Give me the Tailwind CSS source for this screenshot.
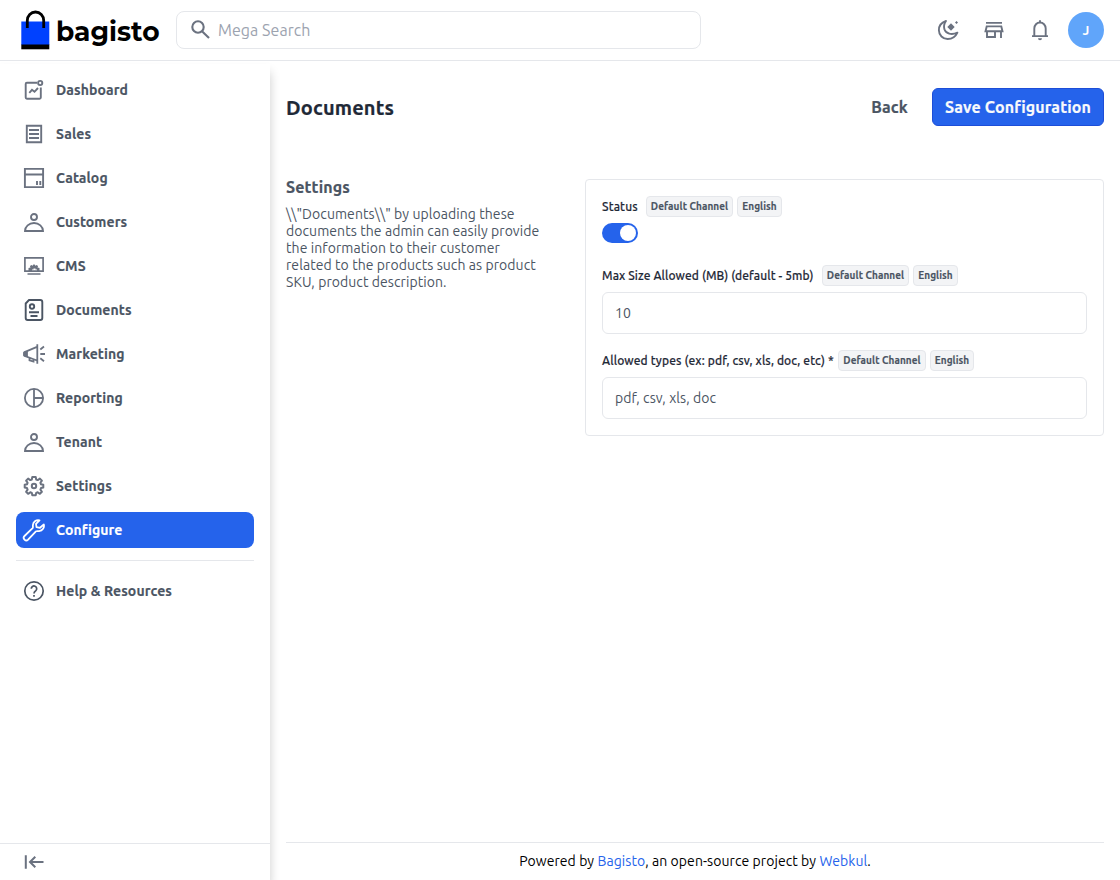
<!DOCTYPE html>
<html lang="en">
<head>
<meta charset="utf-8">
<title>Documents</title>
<script src="https://cdn.jsdelivr.net/npm/@tailwindcss/browser@4"></script>
</head>
<body class="flex h-[880px] w-[1120px] flex-col overflow-hidden bg-white font-['Ubuntu','Noto_Sans',sans-serif] text-sm text-[#4b5563]">
<header class="flex h-[61px] shrink-0 items-center border-b border-[#e5e7eb] pr-4 pl-5">
  <div class="flex w-[156px] items-center">
    <svg class="h-[40px] w-[31px] shrink-0" viewBox="0 0 31 40"><path fill="#0041ff" d="M1.300 11.500h28v23.500h-28z"/><path d="M1.300 34.500h28v4.800h-28z"/><path d="M7.300 18V10.500a8.200 8.500 0 0 1 16.400 0V18" fill="none" stroke="#000" stroke-width="2.800"/></svg>
    <span class="mt-[3px] ml-[5px] font-['Montserrat','Inter',sans-serif] text-[26.500px] leading-8 font-bold text-black">bagisto</span>
  </div>
  <div class="flex h-[38px] w-[525px] items-center rounded-lg border border-[#e5e7eb] pl-[13px] text-[#9ca3af]">
    <svg class="mr-[7px] size-[21px] text-[#6b7280]" viewBox="0 0 21 21" fill="none" stroke="currentColor" stroke-width="2.100"><circle cx="8" cy="7" r="5.700"/><path d="m12 11.200 7 6.800"/></svg>
    <span class="text-base tracking-[0.050px]">Mega Search</span>
  </div>
  <div class="ml-auto flex items-center text-[#6b7280]">
    <svg class="mr-[22px] size-6" viewBox="0 0 24 24"><path fill="none" stroke="currentColor" stroke-width="1.900" stroke-linejoin="round" d="M10 3C5.500 4.500 2.800 8 2.900 12.300A8.700 8.700 0 0 0 11.700 21c4.500 0 8-2.500 9.700-6.300-6 2.800-11.500 1-13-3.500C7.500 8.200 8.200 5.500 10 3Z"/><path fill="currentColor" d="m15 5.300 3.700 3.700-3.700 3.700L11.300 9ZM20.500 3l1.500 1.500L20.500 6 19 4.500Z"/></svg>
    <svg class="mr-[22px] size-6" viewBox="0 0 24 24" fill="none" stroke="currentColor" stroke-width="1.900"><path d="M4 4.900h16M4.700 8.400h14.600l1.200 4.900H3.500ZM5 13.300V19h8v-5.700M19 13.300V20"/></svg>
    <svg class="mr-4 size-6" viewBox="0 0 24 24" fill="none" stroke="currentColor" stroke-width="1.900"><path d="M4 18.100h16M6.300 18v-7.500a5.700 6 0 0 1 11.400 0V18M12 4.500V2.300"/><path fill="currentColor" stroke="none" d="M10 20.200h4a2 2 0 0 1-4 0Z"/></svg>
    <div class="flex size-9 items-center justify-center rounded-full bg-[#60a5fa] text-[13px] font-bold text-white">J</div>
  </div>
</header>
<div class="flex min-h-0 flex-1">
  <aside class="mt-[3px] flex w-[270px] shrink-0 flex-col shadow-[0_8px_10px_0_rgba(0,0,0,0.2)]">
    <nav class="flex flex-col gap-2 px-4 pt-2 font-bold tracking-[0.110px] [-webkit-text-stroke:0.150px] [&_a]:flex [&_a]:h-9 [&_a]:items-center [&_a]:gap-2.5 [&_a]:rounded-lg [&_a]:pl-1.5 [&_svg]:size-6 [&_svg]:shrink-0 [&_svg]:text-[#6b7280]">
      <a><svg viewBox="0 0 24 24" fill="none" stroke="currentColor" stroke-width="1.900"><path d="M15 4.800H4.900a1.200 1.200 0 0 0-1.200 1.200v13.500a1.200 1.200 0 0 0 1.200 1.200h12.700a1.200 1.200 0 0 0 1.200-1.200V9.500M7.300 14.800l2.700-3 2.500 2 3.500-3.800"/><circle cx="18.200" cy="5" r="2.100"/></svg><span>Dashboard</span></a>
      <a><svg viewBox="0 0 24 24" fill="none" stroke="currentColor" stroke-width="1.900"><path d="M4.800 3.800h14.400v16.400H4.800ZM7 8h10M7 12h10M7 16h10"/></svg><span>Sales</span></a>
      <a><svg viewBox="0 0 24 24" fill="none" stroke="currentColor" stroke-width="1.900"><path d="M2.900 2.900h18.200v18.200H2.900ZM3 8.500h18M15 15v4M18.300 15v4"/></svg><span>Catalog</span></a>
      <a><svg viewBox="0 0 24 24" fill="none" stroke="currentColor" stroke-width="1.900"><circle cx="12" cy="7" r="3"/><path d="M3 21a9 8 0 0 1 18 0Z"/></svg><span>Customers</span></a>
      <a><svg viewBox="0 0 24 24" fill="none" stroke="currentColor" stroke-width="1.700"><path d="M2.900 3.900h18.200v13.300H2.900ZM5.500 20h13"/><path fill="currentColor" stroke="none" d="M6.500 17v-3l2-.5-.6-1.500 1.600-1 1.200.8.600-1.200h1.400l.6 1.200 1.200-.8 1.600 1-.6 1.500 2 .5v3h-2.500v-1.500h-1.500v-1h-2v1h-1.500V17Z"/></svg><span>CMS</span></a>
      <a><svg class="!text-[#4b5563]" viewBox="0 0 24 24" fill="none" stroke="currentColor" stroke-width="1.900"><path d="M7 2h11.300a2 2 0 0 1 2 2v16a2 2 0 0 1-2 2H5.700a2 2 0 0 1-2-2V5.500ZM7 14.200h10M8.500 18h7"/><circle cx="10" cy="8.500" r="2.200"/></svg><span>Documents</span></a>
      <a><svg viewBox="0 0 24 24" fill="none" stroke="currentColor" stroke-width="1.800"><path d="M15.300 2.200v19.600M15 4.800 2.500 10.200v3.600L15 18.500M7.500 16v2.300l4 1.300v-2.500M18.300 7.500 22 4.500M18.300 12H23M18.300 16.300l3.700 3"/><path fill="currentColor" d="m5 10-3 1v2l3 1Z"/></svg><span>Marketing</span></a>
      <a><svg viewBox="0 0 24 24" fill="none" stroke="currentColor" stroke-width="1.800"><circle cx="12" cy="12" r="9.100"/><path d="M12 3v18M12 12h9"/></svg><span>Reporting</span></a>
      <a><svg viewBox="0 0 24 24" fill="none" stroke="currentColor" stroke-width="1.900"><circle cx="12" cy="7" r="3"/><path d="M3 21a9 8 0 0 1 18 0Z"/></svg><span>Tenant</span></a>
      <a><svg viewBox="0 0 24 24" fill="none" stroke="currentColor" stroke-width="2" stroke-linejoin="round"><path d="M10.300 2.900h3.400l.5 2.600 1.500.6 2.200-1.500 2 2-1.500 2.200.6 1.500 2.300.4v2.900l-2.300.5-.6 1.500 1.500 2.200-2 2-2.200-1.500-1.500.6-.5 2.400h-3.400l-.5-2.400-1.500-.6-2.200 1.500-2-2 1.500-2.200-.6-1.500-2.300-.5v-2.900l2.300-.4.600-1.500-1.500-2.200 2-2 2.200 1.500 1.500-.6Z"/><circle cx="12" cy="12" r="2.200"/></svg><span>Settings</span></a>
      <a class="bg-[#2563eb] text-white"><svg class="!text-white" viewBox="0 0 24 24" fill="none" stroke="currentColor" stroke-width="1.800" stroke-linejoin="round"><path d="M17.500 2.300c-3-.8-6.300 1.200-6.600 4.700-.1 1.500.3 2.500-.3 3.200L2.500 18a2.500 2.500 0 0 0 3.600 3.600l7.800-8.200c.7-.6 1.700-.2 3.200-.3 3.500-.3 5.500-3.600 4.700-6.600L18 9.800l-3.500-.7-.5-3.300Z"/></svg><span>Configure</span></a>
    </nav>
    <div class="mx-4 mt-3 border-t border-[#e5e7eb] pt-3">
      <a class="flex h-9 items-center gap-2.5 pl-1.5 font-bold tracking-[0.110px] [-webkit-text-stroke:0.150px]"><svg class="size-6" viewBox="0 0 24 24" fill="none" stroke="currentColor" stroke-width="1.700"><circle cx="12" cy="12" r="9.200"/><path d="M9.300 9.800a2.700 2.700 0 1 1 4.500 1.900c-1.200 1-1.800 1.400-1.800 2.800M12 16v1.700"/></svg><span>Help &amp; Resources</span></a>
    </div>
    <div class="mt-auto flex h-[37px] items-center border-t border-[#e5e7eb] pl-[22px] text-[#6b7280]">
      <svg class="size-6" viewBox="0 0 24 24" fill="none" stroke="currentColor" stroke-width="2"><path d="M3.800 5.200v13.500M21.500 12H8.500M13.300 6.800 8 12l5.300 5.200"/></svg>
    </div>
  </aside>
  <main class="flex flex-1 flex-col pr-4 pl-4">
    <div class="mt-[27px] flex h-[38px] items-center">
      <h1 class="pt-[2px] text-xl font-bold tracking-[0.150px] text-[#1f2937] [-webkit-text-stroke:0.200px]">Documents</h1>
      <span class="mr-6 ml-auto text-base font-bold tracking-[0.140px] [-webkit-text-stroke:0.200px]">Back</span>
      <button class="flex h-[38px] w-[172px] items-center justify-center rounded-md border border-[#1d4ed8] bg-[#2563eb] text-base font-bold tracking-[0.120px] whitespace-nowrap text-[#f9fafb] [-webkit-text-stroke:0.200px]">Save Configuration</button>
    </div>
    <div class="mt-[53px] flex">
      <section class="w-[299px] shrink-0">
        <h2 class="text-base leading-4 font-bold tracking-[0.140px] [-webkit-text-stroke:0.200px]">Settings</h2>
        <p class="mt-[11px] text-sm leading-[17px] tracking-[0.070px] whitespace-nowrap">\\"Documents\\" by uploading these<br>documents the admin can easily provide<br>the information to their customer<br>related to the products such as product<br>SKU, product description.</p>
      </section>
      <section class="h-[257px] flex-1 rounded border border-[#e5e7eb] px-4 pt-4 [&_b]:flex [&_b]:h-[21px] [&_b]:items-center [&_b]:justify-center [&_b]:rounded [&_b]:border [&_b]:border-[#e5e7eb] [&_b]:bg-[#f3f4f6] [&_b]:text-[10px] [&_b]:font-bold [&_b]:tracking-[0.080px] [&_b]:whitespace-nowrap [&_b]:text-[#4b5563]">
        <div class="flex h-[21px] items-center text-xs font-medium text-[#1f2937] [-webkit-text-stroke:0.150px]"><span class="w-11 tracking-[0.150px]">Status</span><b class="mr-1 w-[87px]">Default Channel</b><b class="w-[45px]">English</b></div>
        <div class="mt-[6px] flex h-5 w-9 items-center justify-end rounded-full bg-[#2563eb] pr-0.5"><i class="size-4 rounded-full bg-white"></i></div>
        <div class="mt-[22px] flex h-[21px] items-center text-xs font-medium text-[#1f2937] [-webkit-text-stroke:0.150px]"><span class="w-[220px] tracking-[0.090px] whitespace-nowrap">Max Size Allowed (MB) (default - 5mb)</span><b class="mr-1 w-[87px]">Default Channel</b><b class="w-[45px]">English</b></div>
        <div class="mt-[6px] flex h-[42px] items-center rounded-md border border-[#e5e7eb] px-3"><span class="tracking-[0.070px]">10</span></div>
        <div class="mt-4 flex h-[21px] items-center text-xs font-medium text-[#1f2937] [-webkit-text-stroke:0.150px]"><span class="w-[236px] tracking-[0.120px] whitespace-nowrap">Allowed types (ex: pdf, csv, xls, doc, etc) *</span><b class="mr-1 w-[88px]">Default Channel</b><b class="w-[44px]">English</b></div>
        <div class="mt-[6px] flex h-[42px] items-center rounded-md border border-[#e5e7eb] px-3"><span class="tracking-[0.070px]">pdf, csv, xls, doc</span></div>
      </section>
    </div>
    <footer class="mt-auto flex h-[38px] items-center justify-center border-t border-[#e5e7eb] pb-[2px] tracking-[0.070px] text-black"><p>Powered by <span class="text-[#2563eb]">Bagisto</span>, an open-source project by <span class="text-[#2563eb]">Webkul</span>.</p></footer>
  </main>
</div>
</body>
</html>
